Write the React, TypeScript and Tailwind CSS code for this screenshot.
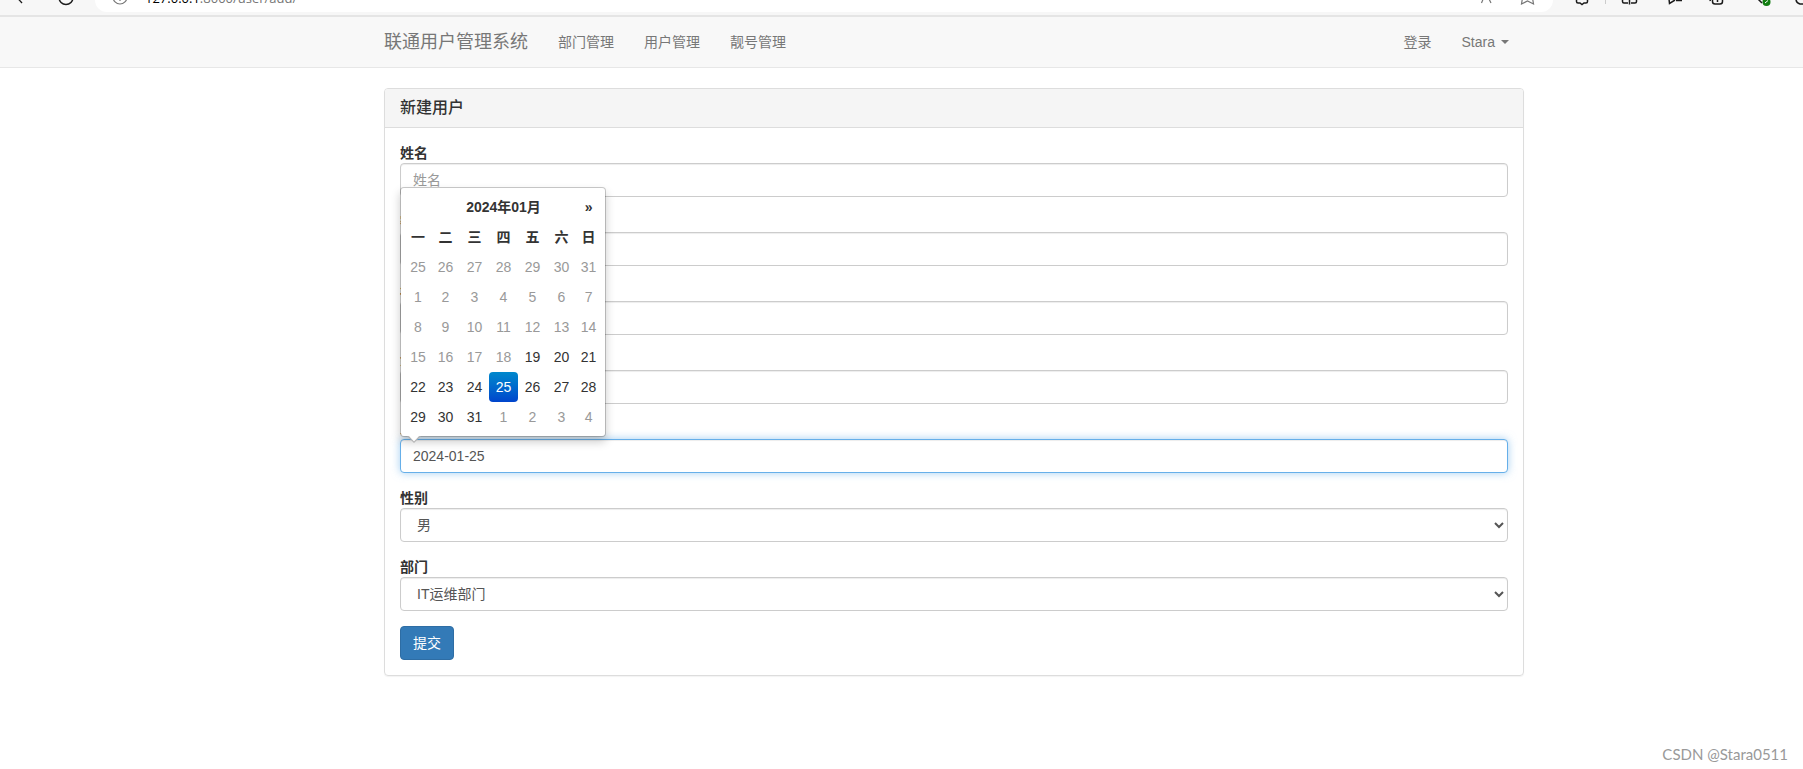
import React from "react";

type Day = { n: number; tone: "muted" | "normal" | "active" };

const WEEKDAYS = ["一", "二", "三", "四", "五", "六", "日"];

const day = (n: number, tone: Day["tone"]): Day => ({ n, tone });
const span = (from: number, to: number, tone: Day["tone"]): Day[] =>
  Array.from({ length: to - from + 1 }, (_, i) => day(from + i, tone));

const WEEKS: Day[][] = [
  span(25, 31, "muted"),
  span(1, 7, "muted"),
  span(8, 14, "muted"),
  [...span(15, 18, "muted"), ...span(19, 21, "normal")],
  [...span(22, 24, "normal"), day(25, "active"), ...span(26, 28, "normal")],
  [...span(29, 31, "normal"), ...span(1, 4, "muted")],
];

const TONES = {
  muted: "text-[#999999]",
  normal: "text-[#333333]",
  active: "bg-linear-to-b from-[#0088cc] to-[#0044cc] text-white",
};

const CONTROL =
  "block h-[34px] w-full rounded border bg-white px-3 text-sm leading-5 text-[#555555] outline-none placeholder:text-[#999999]";
const PLAIN = "border-[#cccccc] shadow-[inset_0_1px_1px_rgba(0,0,0,0.075)]";
const FOCUSED =
  "border-[#66afe9] shadow-[inset_0_1px_1px_rgba(0,0,0,0.075),0_0_8px_rgba(102,175,233,0.6)]";

function Toolbar() {
  return (
    <div className="flex h-[17px] items-start border-b-2 border-[#e5e5e5] bg-[#f7f7f7] text-[#1b1b1b]">
      <svg className="h-[15px] w-[95px] shrink-0" viewBox="0 0 95 15" fill="none" stroke="currentColor">
        <path d="M17 -2.500L22 3" strokeWidth="1.300" />
        <circle cx="66" cy="-2.500" r="7" strokeWidth="1.500" />
      </svg>
      <div className="flex h-3 flex-1 items-start overflow-hidden rounded-b-[14px] bg-white">
        <svg className="h-3 w-[50px] shrink-0" viewBox="0 0 50 12" fill="none" stroke="#767676">
          <circle cx="25" cy="-3" r="7" strokeWidth="1.200" />
          <path d="M25 -4V1" strokeWidth="1.200" />
        </svg>
        <span className="-mt-3 font-['Open_Sans',sans-serif] text-[13px] leading-5 text-[#767676]">
          <span className="text-black">127.0.0.1</span>:8000/user/add/
        </span>
        <svg className="ml-auto h-3 w-[80px] shrink-0" viewBox="0 0 80 12" fill="none" stroke="#767676">
          <path d="M8.500 3L11 -3M18 3L15 -3" strokeWidth="1.200" />
          <path d="M49.500 -2L48.500 4L54.500 1L60.500 4L59.500 -2" strokeWidth="1.200" />
        </svg>
      </div>
      <svg className="h-[15px] w-[250px] shrink-0" viewBox="0 0 250 15" fill="none" stroke="currentColor" strokeWidth="1.500">
        <path d="M23.500 -1V1.500Q23.500 3 25 3H27L29 4.500L31 3H33Q34.500 3 34.500 1.500V-1" />
        <path d="M52.500 0V4" stroke="#cccccc" strokeWidth="1" />
        <path d="M69.500 -1V1.500Q69.500 3 71 3H75M76.500 -1V4.500M78 3H82Q83.500 3 83.500 1.500V-1" />
        <path d="M116 -1L116.500 3.500L122 0M123 0.500H129" />
        <path d="M159.500 -2V1.500Q159.500 4 162 4H167Q169.500 4 169.500 1.500V-2M164.500 -1V2M156.500 -1L157.500 1" />
        <path d="M205 -1L209 3" />
        <circle cx="213.500" cy="2" r="4" fill="#107c10" stroke="none" />
        <path d="M212 3L215 0.500" stroke="#ffffff" strokeWidth="1" />
        <path d="M243 -1Q243 3 247 4H250" />
      </svg>
    </div>
  );
}

function Navbar() {
  const link = "px-[15px] py-[15px] text-sm leading-5";
  return (
    <nav className="border-b border-[#e7e7e7] bg-[#f8f8f8] text-[#777777]">
      <div className="mr-[279px] ml-[384px] flex h-[50px] items-center">
        <a href="#" className="pr-[15px] text-lg leading-5">联通用户管理系统</a>
        <a href="#" className={link}>部门管理</a>
        <a href="#" className={link}>用户管理</a>
        <a href="#" className={link}>靓号管理</a>
        <a href="#" className={`${link} ml-auto`}>登录</a>
        <a href="#" className={`${link} flex items-center`}>
          Stara
          <span className="ml-1.5 border-x-4 border-t-4 border-x-transparent border-t-[#777777]" />
        </a>
      </div>
    </nav>
  );
}

function DatePicker() {
  return (
    <div className="absolute bottom-9 left-0 z-10 rounded border border-black/20 bg-white bg-clip-padding p-1 shadow-[0_5px_10px_rgba(0,0,0,0.2)]">
      <table className="w-[196px] table-fixed border-collapse text-center text-sm leading-5 text-[#333333]">
        <colgroup>
          <col className="w-[26px]" />
          <col className="w-[29px]" />
          <col className="w-[29px]" />
          <col className="w-[29px]" />
          <col className="w-[29px]" />
          <col className="w-[29px]" />
          <col className="w-[25px]" />
        </colgroup>
        <thead>
          <tr className="h-[30px]">
            <th />
            <th colSpan={5} className="p-0 font-bold">2024年01月</th>
            <th className="p-0">
              <button type="button" className="font-bold">»</button>
            </th>
          </tr>
          <tr className="h-[30px]">
            {WEEKDAYS.map((w) => (
              <th key={w} className="p-0 font-bold">{w}</th>
            ))}
          </tr>
        </thead>
        <tbody>
          {WEEKS.map((week, i) => (
            <tr key={i} className="h-[30px]">
              {week.map((d) => (
                <td key={d.n} className="p-0">
                  <button type="button" className={`block h-[30px] w-full rounded ${TONES[d.tone]}`}>
                    {d.n}
                  </button>
                </td>
              ))}
            </tr>
          ))}
        </tbody>
      </table>
      <svg className="absolute top-full left-[6px] h-[7px] w-[14px]" viewBox="0 0 14 7">
        <path d="M0 0L7 7L14 0Z" fill="#b3b3b3" />
        <path d="M1 -1L7 5.500L13 -1Z" fill="#ffffff" />
      </svg>
    </div>
  );
}

function Field({ id, label, children }: { id: string; label: string; children: React.ReactNode }) {
  return (
    <div className="mb-[15px]">
      <label htmlFor={id} className="block text-sm leading-5 font-bold">{label}</label>
      {children}
    </div>
  );
}

function Select({ id, value }: { id: string; value: string }) {
  return (
    <select id={id} className={`${CONTROL} ${PLAIN}`}>
      <option>{value}</option>
    </select>
  );
}

export default function App() {
  return (
    <div className="min-h-screen bg-white font-['Liberation_Sans','Noto_Sans_CJK_SC',sans-serif] text-sm text-[#333333]">
      <Toolbar />
      <Navbar />
      <main className="mt-5 mr-[279px] ml-[384px]">
        <section className="rounded border border-[#dddddd] shadow-[0_1px_1px_rgba(0,0,0,0.05)]">
          <header className="rounded-t-[3px] border-b border-[#dddddd] bg-[#f5f5f5] px-[15px] py-[10px]">
            <h3 className="text-base leading-[18px] font-medium">新建用户</h3>
          </header>
          <form className="p-[15px]">
            <Field id="name" label="姓名">
              <input id="name" placeholder="姓名" className={`${CONTROL} ${PLAIN}`} />
            </Field>
            <Field id="password" label="密码">
              <input id="password" type="password" className={`${CONTROL} ${PLAIN}`} />
            </Field>
            <Field id="age" label="年龄">
              <input id="age" className={`${CONTROL} ${PLAIN}`} />
            </Field>
            <Field id="account" label="余额">
              <input id="account" className={`${CONTROL} ${PLAIN}`} />
            </Field>
            <Field id="date" label="入职时间">
              <div className="relative">
                <input id="date" defaultValue="2024-01-25" className={`${CONTROL} ${FOCUSED}`} />
                <DatePicker />
              </div>
            </Field>
            <Field id="gender" label="性别">
              <Select id="gender" value="男" />
            </Field>
            <Field id="depart" label="部门">
              <Select id="depart" value="IT运维部门" />
            </Field>
            <button type="submit" className="block rounded border border-[#2e6da4] bg-[#337ab7] px-3 py-1.5 text-sm leading-5 text-white">
              提交
            </button>
          </form>
        </section>
      </main>
      <footer className="mt-[68px] mr-[15px] flex justify-end font-['Lato',sans-serif] text-[15px] leading-5 text-[#999999]">
        CSDN @Stara0511
      </footer>
    </div>
  );
}
